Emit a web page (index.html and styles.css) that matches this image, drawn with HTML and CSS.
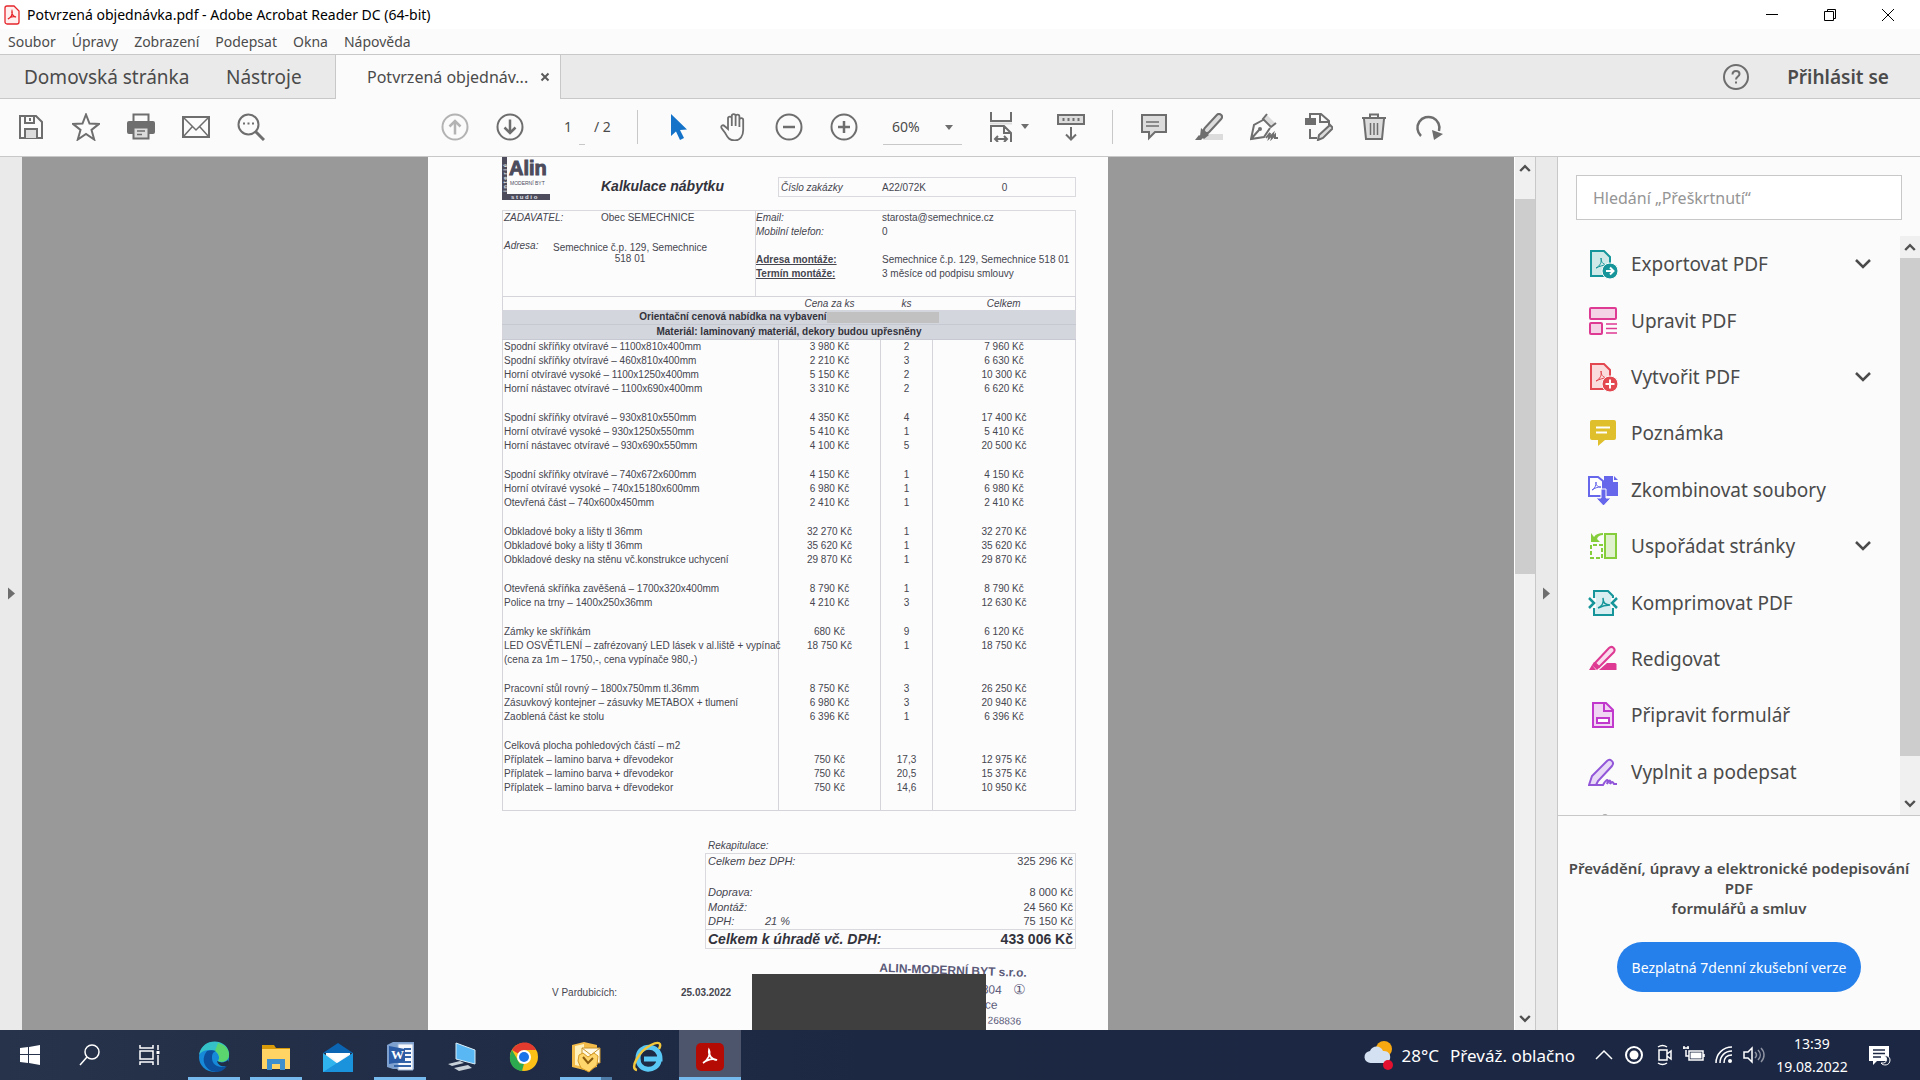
FILE: index.html
```html
<!DOCTYPE html>
<html lang="cs">
<head>
    <meta charset="UTF-8">
    <meta name="viewport" content="width=device-width, initial-scale=1.0">
    <title>Potvrzená objednávka.pdf - Adobe Acrobat Reader DC (64-bit)</title>
    <link rel="stylesheet" href="styles.css">
</head>
<body>
    <header class="titlebar">
        <svg class="app-icon" viewBox="0 0 16 20"><path d="M3 1h7l5 5v11a2 2 0 0 1-2 2H3a2 2 0 0 1-2-2V3a2 2 0 0 1 2-2z" fill="#fff0ef" stroke="#e5252a" stroke-width="1.3"/><path d="M4 14c3-1 5-5 4-8-1 3 2 6 4 6-3-1-6 0-8 2z" fill="none" stroke="#e5252a" stroke-width="1.3"/></svg>
        <span class="window-title">Potvrzená objednávka.pdf - Adobe Acrobat Reader DC (64-bit)</span>
        <div class="window-buttons">
            <button aria-label="Minimalizovat"><svg viewBox="0 0 14 14"><path d="M1 6.500h12"/></svg></button>
            <button aria-label="Obnovit"><svg viewBox="0 0 14 14"><path d="M1.500 3.500h9v9h-9zM4.500 3.500v-2h8v9h-2"/></svg></button>
            <button aria-label="Zavřít"><svg viewBox="0 0 14 14"><path d="M1 1l12 12M13 1L1 13"/></svg></button>
        </div>
    </header>

    <nav class="menubar">
        <a href="#">Soubor</a>
        <a href="#">Úpravy</a>
        <a href="#">Zobrazení</a>
        <a href="#">Podepsat</a>
        <a href="#">Okna</a>
        <a href="#">Nápověda</a>
    </nav>

    <div class="tabbar">
        <a class="tab home" href="#">Domovská stránka</a>
        <a class="tab tools-tab" href="#">Nástroje</a>
        <div class="tab active">
            <a href="#">Potvrzená objednáv...</a>
            <button class="tab-close" aria-label="Zavřít kartu"><svg viewBox="0 0 10 10"><path d="M1.500 1.500l7 7M8.500 1.500l-7 7"/></svg></button>
        </div>
        <div class="account">
            <button aria-label="Nápověda"><svg class="icon" viewBox="0 0 28 28"><circle cx="14" cy="14" r="12"/><path d="M10.500 11.500c0-5 7-4.500 7-.5 0 2.500-3.500 2.500-3.500 5.500M14 18.500v2"/></svg></button>
            <a class="login" href="#">Přihlásit se</a>
        </div>
    </div>

    <div class="toolbar">
        <div class="tool-group">
            <button aria-label="Uložit"><svg class="icon" viewBox="0 0 28 28"><path d="M3 3h16l6 6v16H3z"/><path d="M8 3v7h9V3M13 5v3"/><path class="shade" d="M8 25v-9h12v9"/></svg></button>
            <button aria-label="Přidat hvězdičku"><svg class="icon" viewBox="0 0 28 28"><path d="M14 1.500l3.500 9 9.500.4-7.500 6 2.700 9.600L14 21l-8.200 5.500 2.700-9.600-7.500-6 9.500-.4z"/></svg></button>
            <button aria-label="Tisk"><svg class="icon" viewBox="0 0 28 28"><path d="M6.500 9V1.500h15V9"/><path class="solid" d="M2 9h24a1 1 0 0 1 1 1v9a1 1 0 0 1-1 1h-3v-5H5v5H2a1 1 0 0 1-1-1v-9a1 1 0 0 1 1-1z"/><path class="shade" d="M6.500 14.500h15v11h-15z"/><path d="M10 18h8M10 21.500h5" stroke-width="1.500"/></svg></button>
            <button aria-label="Odeslat e-mailem"><svg class="icon" viewBox="0 0 28 28"><path d="M1 4h26v20H1z"/><path d="M1.500 4.500L14 17 26.500 4.500M1.500 23.500L10 14M26.500 23.500L18 14" stroke-width="1.500"/></svg></button>
            <button aria-label="Hledat"><svg class="icon" viewBox="0 0 28 28"><circle cx="11.500" cy="11.500" r="10"/><path d="M18.500 18.500l8.500 8.500" stroke-width="3"/><path d="M6 10.500h2M10.500 10.500h2M15 10.500h2"/></svg></button>
        </div>
        <div class="tool-group paging">
            <button class="disabled" aria-label="Předchozí stránka" disabled><svg class="icon" viewBox="0 0 28 28"><circle cx="14" cy="14" r="12.500"/><path d="M14 21.500V8M8.500 13.500L14 8l5.500 5.500" stroke-width="2.500"/></svg></button>
            <button aria-label="Další stránka"><svg class="icon" viewBox="0 0 28 28"><circle cx="14" cy="14" r="12.500"/><path d="M14 6.500V20M8.500 14.500L14 20l5.500-5.500" stroke-width="2.500"/></svg></button>
            <input class="page-number" type="text" value="1" aria-label="Číslo stránky">
            <span class="page-count">/ 2</span>
        </div>
        <span class="divider"></span>
        <div class="tool-group">
            <button aria-label="Výběr"><svg class="icon" viewBox="0 0 28 28"><path d="M6 1v22l5-4.500 4 8.500 4-2-4-8 7-.500z" fill="#1473c9" stroke="none"/></svg></button>
            <button aria-label="Ruka"><svg class="icon" viewBox="0 0 28 28"><path d="M8 16V5.500a1.900 1.900 0 0 1 3.800 0V13 3a1.900 1.900 0 0 1 3.800 0v10V3.500a1.900 1.900 0 0 1 3.800 0V14 7a1.900 1.900 0 0 1 3.800 0v10c0 6-3 10.500-8.500 10.500-6 0-7.500-4-9.500-7.500L1.500 15c-1-2.500 1.500-3.500 3-2z" stroke-width="1.800"/></svg></button>
            <button aria-label="Zmenšit"><svg class="icon" viewBox="0 0 28 28"><circle cx="14" cy="14" r="12.500"/><path d="M8 14h12" stroke-width="2.500"/></svg></button>
            <button aria-label="Zvětšit"><svg class="icon" viewBox="0 0 28 28"><circle cx="14" cy="14" r="12.500"/><path d="M8 14h12M14 8v12" stroke-width="2.500"/></svg></button>
        </div>
        <div class="zoom">
            <select aria-label="Lupa"><option>60%</option><option>100%</option></select>
            <svg viewBox="0 0 8 5"><path d="M0 0h8L4 5z"/></svg>
        </div>
        <button class="fit" aria-label="Přizpůsobit šířce">
            <svg class="icon" viewBox="0 0 24 30"><path d="M2 0v9h20V0"/><path d="M1 11.500h22" stroke="#dcdcdc"/><path d="M2 30V14h13l7 7v9M15 14v7h7M6 27h12M9 24l-3 3 3 3M15 24l3 3-3 3"/></svg>
            <svg class="caret" viewBox="0 0 8 5"><path d="M0 0h8L4 5z"/></svg>
        </button>
        <div class="tool-group scrolling">
            <button aria-label="Posouvání"><svg class="icon" viewBox="0 0 28 28"><path class="shade" d="M1 2h26v9H1z"/><path d="M6.500 5v3M11.500 5v3M16.500 5v3M21.500 5v3M14 14v12M9 21.500l5 5 5-5"/></svg></button>
        </div>
        <span class="divider"></span>
        <div class="tool-group">
            <button aria-label="Komentář"><svg class="icon" viewBox="0 0 28 28"><path class="shade" d="M2 2h24v17H15l-6 6v-6H2z"/><path d="M6 9h13M6 13h13" stroke-width="1.500"/></svg></button>
            <button aria-label="Zvýraznění"><svg class="icon" viewBox="0 0 28 28"><path d="M11 21h17v6H8z" fill="#dcdcdc" stroke="none"/><path d="M12 17L24 4" stroke-width="8" stroke-linecap="round"/><path d="M12 17L24 4" stroke="#dcdcdc" stroke-width="4" stroke-linecap="round"/><path d="M6 15l8 7-5 4-4-3zM0 27l4-5 4 3-2 2z" fill="#6e6e6e" stroke="none"/></svg></button>
            <button aria-label="Podpis"><svg class="icon" viewBox="0 0 28 28"><path d="M17 2l8 8-4 4-8-8z" fill="#dcdcdc" stroke="none"/><path d="M17 1l-4 5 8 8 5-4M13 7L4 12 1 26l13-2 6-9M1 26l8-9"/><circle cx="10" cy="16" r="1"/><path d="M16 25l4-5-1 5 4-4-1 4 3-3v3h3"/></svg></button>
            <button aria-label="Upravit"><svg class="icon" viewBox="0 0 28 28"><path d="M5 5V1h11l8 7v4M15 1v8h8M5 16v9h7"/><path d="M0 5h11v7H0z" fill="#6e6e6e" stroke="none"/><path class="shade" d="M13 27l1-5 11-10 3 3-10 10z"/></svg></button>
            <button aria-label="Odstranit"><svg class="icon" viewBox="0 0 28 28"><path d="M2 5h24M10 5V1.500h8V5"/><path class="shade" d="M4 6l2 20h16l2-20"/><path d="M10.500 10v12M14 10v12M17.500 10v12" stroke-width="1.500"/></svg></button>
            <button aria-label="Otočit"><svg class="icon" viewBox="0 0 28 28"><path d="M6 23A11 11 0 1 1 24 18" stroke-width="2.500"/><path d="M17 17l11 4-9 6z" fill="#6e6e6e" stroke="none"/></svg></button>
        </div>
    </div>

    <main class="workspace">
        <button class="left-strip" aria-label="Navigační panel"><svg viewBox="0 0 7 12"><path d="M0 0l7 6-7 6z"/></svg></button>

        <div class="viewer">
            <article class="sheet">
                <div class="sheet-head">
                    <svg class="logo" viewBox="0 0 48 43">
                        <path d="M0 0h5v37h43v6H0z" fill="#4c4c5c"/>
                        <text class="logo-name" x="7" y="18">Alin</text>
                        <text class="logo-small" x="8" y="28">MODERNÍ BYT</text>
                        <text class="logo-bar" x="9" y="42">s t u d i o</text>
                        <text class="logo-bar" transform="rotate(-90)" x="-35" y="5">i n t e r i é</text>
                    </svg>
                    <h1>Kalkulace nábytku</h1>
                    <div class="order-number"><em>Číslo zakázky</em><span>A22/072K</span><span class="zero">0</span></div>
                </div>

                <div class="parties">
                    <div class="client">
                        <div class="client-name"><em>ZADAVATEL:</em><span>Obec SEMECHNICE</span></div>
                        <div class="client-address"><em>Adresa:</em><span>Semechnice č.p. 129, Semechnice<br>518 01</span></div>
                    </div>
                    <dl class="contact">
                        <dt>Email:</dt><dd>starosta@semechnice.cz</dd>
                        <dt>Mobilní telefon:</dt><dd>0</dd>
                        <dt class="place">Adresa montáže:</dt><dd class="place-value">Semechnice č.p. 129, Semechnice 518 01</dd>
                        <dt class="term">Termín montáže:</dt><dd>3 měsíce od podpisu smlouvy</dd>
                    </dl>
                </div>

                <table class="items">
                    <colgroup><col class="col-name"><col class="col-price"><col class="col-count"><col></colgroup>
                    <thead>
                        <tr><th></th><th>Cena za ks</th><th>ks</th><th>Celkem</th></tr>
                        <tr class="band"><td colspan="4">Orientační cenová nabídka na vybavení<span class="redacted"></span></td></tr>
                        <tr class="band"><td colspan="4">Materiál: laminovaný materiál, dekory budou upřesněny</td></tr>
                    </thead>
                    <tbody>
                        <tr><td>Spodní skříňky otvíravé – 1100x810x400mm</td><td>3 980 Kč</td><td>2</td><td>7 960 Kč</td></tr>
                        <tr><td>Spodní skříňky otvíravé – 460x810x400mm</td><td>2 210 Kč</td><td>3</td><td>6 630 Kč</td></tr>
                        <tr><td>Horní otvíravé vysoké – 1100x1250x400mm</td><td>5 150 Kč</td><td>2</td><td>10 300 Kč</td></tr>
                        <tr><td>Horní nástavec otvíravé – 1100x690x400mm</td><td>3 310 Kč</td><td>2</td><td>6 620 Kč</td></tr>
                        <tr class="blank"><td></td><td></td><td></td><td></td></tr>
                        <tr><td>Spodní skříňky otvíravé – 930x810x550mm</td><td>4 350 Kč</td><td>4</td><td>17 400 Kč</td></tr>
                        <tr><td>Horní otvíravé vysoké – 930x1250x550mm</td><td>5 410 Kč</td><td>1</td><td>5 410 Kč</td></tr>
                        <tr><td>Horní nástavec otvíravé – 930x690x550mm</td><td>4 100 Kč</td><td>5</td><td>20 500 Kč</td></tr>
                        <tr class="blank"><td></td><td></td><td></td><td></td></tr>
                        <tr><td>Spodní skříňky otvíravé – 740x672x600mm</td><td>4 150 Kč</td><td>1</td><td>4 150 Kč</td></tr>
                        <tr><td>Horní otvíravé vysoké – 740x15180x600mm</td><td>6 980 Kč</td><td>1</td><td>6 980 Kč</td></tr>
                        <tr><td>Otevřená část – 740x600x450mm</td><td>2 410 Kč</td><td>1</td><td>2 410 Kč</td></tr>
                        <tr class="blank"><td></td><td></td><td></td><td></td></tr>
                        <tr><td>Obkladové boky a lišty tl 36mm</td><td>32 270 Kč</td><td>1</td><td>32 270 Kč</td></tr>
                        <tr><td>Obkladové boky a lišty tl 36mm</td><td>35 620 Kč</td><td>1</td><td>35 620 Kč</td></tr>
                        <tr><td>Obkladové desky na stěnu vč.konstrukce uchycení</td><td>29 870 Kč</td><td>1</td><td>29 870 Kč</td></tr>
                        <tr class="blank"><td></td><td></td><td></td><td></td></tr>
                        <tr><td>Otevřená skříňka zavěšená – 1700x320x400mm</td><td>8 790 Kč</td><td>1</td><td>8 790 Kč</td></tr>
                        <tr><td>Police na trny – 1400x250x36mm</td><td>4 210 Kč</td><td>3</td><td>12 630 Kč</td></tr>
                        <tr class="blank"><td></td><td></td><td></td><td></td></tr>
                        <tr><td>Zámky ke skříňkám</td><td>680 Kč</td><td>9</td><td>6 120 Kč</td></tr>
                        <tr><td>LED OSVĚTLENÍ – zafrézovaný LED lásek v al.liště + vypínač</td><td>18 750 Kč</td><td>1</td><td>18 750 Kč</td></tr>
                        <tr><td>(cena za 1m – 1750,-, cena vypínače 980,-)</td><td></td><td></td><td></td></tr>
                        <tr class="blank"><td></td><td></td><td></td><td></td></tr>
                        <tr><td>Pracovní stůl rovný – 1800x750mm tl.36mm</td><td>8 750 Kč</td><td>3</td><td>26 250 Kč</td></tr>
                        <tr><td>Zásuvkový kontejner – zásuvky METABOX + tlumení</td><td>6 980 Kč</td><td>3</td><td>20 940 Kč</td></tr>
                        <tr><td>Zaoblená část ke stolu</td><td>6 396 Kč</td><td>1</td><td>6 396 Kč</td></tr>
                        <tr class="blank"><td></td><td></td><td></td><td></td></tr>
                        <tr><td>Celková plocha pohledových částí – m2</td><td></td><td></td><td></td></tr>
                        <tr><td>Příplatek – lamino barva + dřevodekor</td><td>750 Kč</td><td>17,3</td><td>12 975 Kč</td></tr>
                        <tr><td>Příplatek – lamino barva + dřevodekor</td><td>750 Kč</td><td>20,5</td><td>15 375 Kč</td></tr>
                        <tr><td>Příplatek – lamino barva + dřevodekor</td><td>750 Kč</td><td>14,6</td><td>10 950 Kč</td></tr>
                        <tr class="blank"><td></td><td></td><td></td><td></td></tr>
                    </tbody>
                </table>

                <table class="summary">
                    <caption>Rekapitulace:</caption>
                    <tbody>
                        <tr><th>Celkem bez DPH:</th><td>325 296 Kč</td></tr>
                        <tr class="spacer"><th></th><td></td></tr>
                        <tr><th>Doprava:</th><td>8 000 Kč</td></tr>
                        <tr><th>Montáž:</th><td>24 560 Kč</td></tr>
                        <tr><th><span class="tax-name">DPH:</span>21 %</th><td>75 150 Kč</td></tr>
                        <tr class="total"><th>Celkem k úhradě vč. DPH:</th><td>433 006 Kč</td></tr>
                    </tbody>
                </table>

                <div class="sheet-foot">
                    <span class="city">V Pardubicích:</span>
                    <strong class="date">25.03.2022</strong>
                    <div class="stamp">
                        <div class="stamp-text"><b>ALIN-MODERNÍ BYT s.r.o.</b><span>304 <i>①</i></span><span class="stamp-city">ce</span><span class="stamp-id">268836</span></div>
                        <div class="cover"></div>
                    </div>
                </div>
            </article>
        </div>

        <div class="scrollbar viewer-scroll">
            <svg viewBox="0 0 10 6"><path d="M1 5.500l4-4 4 4"/></svg>
            <div class="thumb"></div>
            <svg class="down" viewBox="0 0 10 6"><path d="M1 .5l4 4 4-4"/></svg>
        </div>
        <button class="right-strip" aria-label="Skrýt panel nástrojů"><svg viewBox="0 0 7 12"><path d="M0 0l7 6-7 6z"/></svg></button>

        <aside class="panel">
            <div class="search"><input type="search" aria-label="Hledat nástroj" placeholder="Hledání „Přeškrtnutí“"></div>
            <div class="tools">
                <ul>
                    <li><a href="#"><svg viewBox="0 0 30 30"><path d="M3 2h13l6 6v19H3z" fill="#cfe8e8" stroke="#16969a" stroke-width="2"/><path d="M8 19c4-2 6-6 5-10 0 5 3 7 7 7-5 0-8 1-12 3z" fill="none" stroke="#16969a"/><circle cx="22" cy="22" r="8" fill="#16969a" stroke="#fbfbfb"/><path d="M18 22h7M22 18.500l3.500 3.500-3.500 3.500" fill="none" stroke="#fff" stroke-width="2"/></svg>Exportovat PDF<svg class="chevron" viewBox="0 0 16 10"><path d="M1 1l7 7 7-7"/></svg></a></li>
                    <li><a href="#"><svg viewBox="0 0 30 30"><g fill="#f5d3e7" stroke="#de3a93" stroke-width="2"><rect x="2" y="2" width="26" height="11" rx="1"/><rect x="2" y="17" width="12" height="11" rx="1"/></g><path d="M18 18h11M18 22.500h11M18 27h11" stroke="#de3a93" stroke-width="1.500"/></svg>Upravit PDF</a></li>
                    <li><a href="#"><svg viewBox="0 0 30 30"><path d="M3 2h13l6 6v19H3z" fill="#fadcdd" stroke="#e34850" stroke-width="2"/><path d="M8 19c4-2 6-6 5-10 0 5 3 7 7 7-5 0-8 1-12 3z" fill="none" stroke="#e34850"/><circle cx="22" cy="22" r="8" fill="#e34850" stroke="#fbfbfb"/><path d="M17.500 22h9M22 17.500v9" stroke="#fff" stroke-width="2"/></svg>Vytvořit PDF<svg class="chevron" viewBox="0 0 16 10"><path d="M1 1l7 7 7-7"/></svg></a></li>
                    <li><a href="#"><svg viewBox="0 0 30 30"><path d="M4 2h22a2 2 0 0 1 2 2v16a2 2 0 0 1-2 2H17l-7 6v-6H4a2 2 0 0 1-2-2V4a2 2 0 0 1 2-2z" fill="#dfbf2b"/><path d="M8 9.500h14M8 14.500h11" stroke="#fff" stroke-width="2"/></svg>Poznámka</a></li>
                    <li><a href="#"><svg viewBox="0 0 30 30"><path d="M1 2h9l5 4v15H1z" fill="#fff" stroke="#6767ec" stroke-width="2"/><path d="M4 15c3-1 4-5 4-8 0 4 2 5 5 5-4 0-6 1-9 3z" fill="none" stroke="#6767ec"/><path d="M16 1h9v6h5v14H16z" fill="#6767ec"/><path d="M26 1l4 4h-4z" fill="#6767ec"/><path d="M13 14h5v9h5l-7.500 8L8 23h5z" fill="#6767ec" stroke="#fbfbfb"/></svg>Zkombinovat soubory</a></li>
                    <li><a href="#"><svg viewBox="0 0 30 30"><rect x="17" y="3" width="11" height="24" fill="#e0f2cd" stroke="#85cd3b" stroke-width="2"/><path d="M3 14v13h11V14z" fill="none" stroke="#85cd3b" stroke-width="2" stroke-dasharray="4 2"/><path d="M3 2v9h9L9 8c1-3 3-4 6-4V2c-4 0-7 1-9 4z" fill="#85cd3b"/></svg>Uspořádat stránky<svg class="chevron" viewBox="0 0 16 10"><path d="M1 1l7 7 7-7"/></svg></a></li>
                    <li><a href="#"><svg viewBox="0 0 30 30"><path d="M6 10V3h14l5 5v2M6 20v7h19v-7" fill="#d9eef0" stroke="#16969a" stroke-width="2"/><path d="M8 10h15v10H8z" fill="#d9eef0"/><path d="M10 20c4-2 6-6 5-10 0 5 3 7 7 7-5 0-8 1-12 3z" fill="none" stroke="#16969a" stroke-width="1.500"/><path d="M1 10l5 5-5 5M29 10l-5 5 5 5" fill="none" stroke="#16969a" stroke-width="2.500"/></svg>Komprimovat PDF</a></li>
                    <li><a href="#"><svg viewBox="0 0 30 30"><path d="M11 26l8-7h8a1.500 1.500 0 0 1 1.500 1.500V26z" fill="#de3a93"/><path d="M7 19L21 4c3-3 7 1 5 4L11 23z" fill="#f9dced" stroke="#de3a93" stroke-width="2"/><path d="M6 18l6 5-3 3-5-5zM1 26l3-5 4 5z" fill="#de3a93"/></svg>Redigovat</a></li>
                    <li><a href="#"><svg viewBox="0 0 30 30"><path d="M5 3h13l7 7v17H5z" fill="#f0d6f2" stroke="#c038cc" stroke-width="2"/><path d="M16 3v8h9" fill="none" stroke="#c038cc" stroke-width="2"/><rect x="9" y="18" width="12" height="5" fill="#fff" stroke="#c038cc" stroke-width="2"/></svg>Připravit formulář</a></li>
                    <li><a href="#"><svg viewBox="0 0 30 30"><path d="M1 28l3-9L19 4c3-3 8 1 5 5L10 24l-2 4z" fill="#e8daf7" stroke="#9256d9" stroke-width="2"/><path d="M1 28h14c4-7 6-6 4-1 3-5 4-4 3 0 3-4 3-1 4 0h3" fill="none" stroke="#9256d9" stroke-width="2"/></svg>Vyplnit a podepsat</a></li>
                    <li class="next-tool"><svg viewBox="0 0 30 30"><circle cx="17" cy="32" r="3" fill="#aaa"/></svg></li>
                </ul>
                <div class="scrollbar">
                    <svg viewBox="0 0 10 6"><path d="M1 5.500l4-4 4 4"/></svg>
                    <div class="thumb"></div>
                    <svg class="down" viewBox="0 0 10 6"><path d="M1 .5l4 4 4-4"/></svg>
                </div>
            </div>
            <div class="promo">
                <p>Převádění, úpravy a elektronické podepisování PDF<br>formulářů a smluv</p>
                <button>Bezplatná 7denní zkušební verze</button>
            </div>
        </aside>
    </main>

    <footer class="taskbar">
        <button class="system" aria-label="Start"><svg viewBox="0 0 24 24"><path d="M2 5l8-1v7H2zM11 4l11-2v9H11zM2 12h8v8l-8-1zM11 12h11v10l-11-2z" fill="#fff"/></svg></button>
        <button class="system" aria-label="Hledat"><svg viewBox="0 0 24 24"><circle cx="14" cy="9" r="7" class="line"/><path class="line" d="M9 14l-7 8"/></svg></button>
        <button class="system" aria-label="Zobrazení úkolů"><svg viewBox="0 0 24 24"><path class="line" d="M2 2v3h13V2M2 8h13v8H2zM2 22v-3h13v3M20 2v5M20 12v10"/><path d="M18.500 8h3v3h-3z" fill="#fff"/></svg></button>

        <button class="app running" aria-label="Edge"><svg viewBox="0 0 32 32"><circle cx="16" cy="16" r="15" fill="#1689d8"/><path d="M1 14C4-4 29-3 31 12c1 8-7 10-11 8 3-4-1-12-9-11C6 9 2 12 1 14z" fill="#35c1c8"/><path d="M20 2c8 2 11 7 11 12 0 6-6 8-11 6 3-4 0-8-3-10z" fill="#5bd66f"/><path d="M9 10c-8 10 0 21 10 21 4 0 8-3 10-6-8 3-15-1-15-8 0-4 1-6 4-7-3-1-6-1-9 0z" fill="#0c4f9c"/><path d="M19 20c3 2 8 2 11-1 1 2 0 4-1 6-6 1-9-1-10-5z" fill="#222d46"/></svg></button>
        <button class="app running" aria-label="Průzkumník"><svg viewBox="0 0 32 32"><path d="M2 4h12l2 3h14v5H2z" fill="#d99a0a"/><path d="M2 8h28v20H2z" fill="#ffd464"/><path d="M7 29V18h18v11h-5v-6h-8v6z" fill="#3d8fce"/></svg></button>
        <button class="app" aria-label="Pošta"><svg viewBox="0 0 32 32"><path d="M1 12L16 2l15 10z" fill="#0b65b3"/><path d="M4 12h24v10H4z" fill="#f4f6f8"/><path d="M1 12l15 11 15-11v19H1z" fill="#30b4ee"/><path d="M1 31l30-19v19z" fill="#1a93dc"/><path d="M4 12h24L16 21z" fill="#fff"/></svg></button>
        <button class="app running" aria-label="Word"><svg viewBox="0 0 32 32"><path d="M3 4l6-3h21v27H9l-6-2z" fill="#7ea0cf"/><path d="M14 3h15v26H14z" fill="#f7f9fc" stroke="#9bb2d3"/><path d="M20 8h7M20 12h7M20 16h7M10 21h17M10 25h17" stroke="#3564a8" stroke-width="2"/><path d="M5 5l16 3v12L5 23z" fill="#2c5ca5"/><text class="word-letter" x="7" y="18">W</text></svg></button>
        <button class="app" aria-label="Vzdálená plocha"><svg viewBox="0 0 32 32"><path d="M10 2l19 7v14l-19-5z" fill="#59b7f4" stroke="#d8edf9"/><path d="M2 23l12-3 4 2-12 3zM8 27l14-3 4 3-13 3z" fill="#c8d0d8"/></svg></button>
        <button class="app" aria-label="Chrome"><svg viewBox="0 0 32 32"><circle cx="16" cy="16" r="14" fill="#fbc116"/><path d="M16 16L4 9C10-1 24-1 28 9H16z" fill="#e33b2e"/><path d="M4 9l8 14 5-4-3 11C3 29-1 18 4 9z" fill="#2da94f"/><circle cx="16" cy="16" r="7" fill="#fff"/><circle cx="16" cy="16" r="5" fill="#1a73e8"/></svg></button>
        <button class="app running grouped" aria-label="Outlook"><svg viewBox="0 0 32 32"><path d="M2 4l12-3 13 3v22L14 29 2 26z" fill="#f3bc4a"/><path d="M5 5l9-2v23l-9-2z" fill="#fff0bc"/><path d="M12 7h18v15H12z" fill="#fff8e3" stroke="#c9942a"/><path d="M12 7l9 7 9-7" fill="none" stroke="#c9942a"/><path d="M9 14l4-2 5 4 6-4 4 3-1 9-8 7-8-4-3-7z" fill="#ffd66b" stroke="#d69a26"/><path d="M13 16l5 6 5-5" fill="none" stroke="#8a5c10" stroke-width="2"/></svg></button>
        <button class="app" aria-label="Internet Explorer"><svg viewBox="0 0 32 32"><path d="M27 20c-2 11-21 12-21-3C6 3 28 2 28 18H12" fill="none" stroke="#5ac8f4" stroke-width="5"/><path d="M5 29c-8-1 2-19 14-25 8-4 11-2 8 4" fill="none" stroke="#f3c73c" stroke-width="2.500"/></svg></button>
        <button class="app running current" aria-label="Acrobat"><svg viewBox="0 0 32 32"><rect x="2" y="2" width="28" height="28" rx="5" fill="#b50b05"/><path d="M9 22c5-3 8-9 6-13-1 5 3 10 8 10-5-2-10 0-14 3z" fill="none" stroke="#fff" stroke-width="1.700"/></svg></button>

        <div class="tray">
            <svg class="weather" viewBox="0 0 30 30"><circle cx="20" cy="9" r="8" fill="#f8a912"/><path d="M7 23a6 6 0 0 1-1-12c2-6 11-6 13 0 9-1 10 12 1 12z" fill="#d4e1f3"/><circle cx="24" cy="25" r="5" fill="#e3112f"/></svg>
            <span class="temperature">28°C</span>
            <span class="forecast">Převáž. oblačno</span>
            <svg viewBox="0 0 24 24"><path class="line" d="M4 16l8-8 8 8"/></svg>
            <svg viewBox="0 0 24 24"><circle cx="12" cy="12" r="8" fill="none" stroke="#fff" stroke-width="2"/><circle cx="12" cy="12" r="4.500" fill="#fff"/></svg>
            <svg viewBox="0 0 24 24"><path class="line" d="M7 7h8v10H7zM15 11l4-3v8l-4-3M6 4c3-2 6-2 9 0M6 20c3 2 6 2 9 0"/></svg>
            <svg viewBox="0 0 24 24"><path class="line" d="M7 8h14v9H7zM22 11v3M1 5h6M2 3v3M6 3v3M4 7v6h3"/><path d="M8.500 9.500h11v6h-11z" fill="#fff"/></svg>
            <svg viewBox="0 0 24 24"><path class="line" d="M4 20C4 11 11 4 20 4M8 20C8 13 13 8 20 8M12 20c0-5 3-8 8-8"/><circle cx="18" cy="18" r="2" fill="#fff"/></svg>
            <svg viewBox="0 0 24 24"><path class="line" d="M2 9h4l4-4v14l-4-4H2z"/><path class="line faint" d="M13 9c2 2 2 4 0 6M16 7c3 3 3 7 0 10M19 5c4 4 4 10 0 14"/></svg>
            <div class="clock"><span>13:39</span><span>19.08.2022</span></div>
            <svg class="notice" viewBox="0 0 24 24"><path d="M2 3h20v15H10l-4 4v-4H2z" fill="#fff"/><path d="M6 7h12M6 10.500h12M6 14h8" stroke="#1e2944" stroke-width="1.500"/><path d="M17 13c3 0 5 8-3 7 2 3 9 3 9-3 0-3-3-5-6-4z" fill="#1e2944" stroke="#fff"/></svg>
        </div>
    </footer>
</body>
</html>
```

FILE: styles.css
```css
* {
    box-sizing: border-box;
}
body {
    margin: 0;
    height: 100vh;
    display: flex;
    flex-direction: column;
    overflow: hidden;
    font-family: "Noto Sans", "Open Sans", sans-serif;
    font-size: 14px;
    color: #4b4b4b;
    background: #fbfbfb;
}
a {
    color: inherit;
    text-decoration: none;
}
button {
    display: flex;
    align-items: center;
    justify-content: center;
    padding: 0;
    border: none;
    background: none;
    font: inherit;
    color: inherit;
}
svg {
    flex: none;
}

/* window frame */
.titlebar {
    display: flex;
    align-items: center;
    flex: none;
    height: 29px;
    padding-left: 4px;
    background: #fff;
    color: #000;
}
.app-icon {
    width: 16px;
    height: 20px;
    margin-right: 7px;
}
.window-buttons {
    display: flex;
    margin-left: auto;
}
.window-buttons button {
    width: 58px;
    height: 28px;
}
.window-buttons svg {
    width: 14px;
    height: 14px;
    fill: none;
    stroke: #000;
}
.window-buttons button:last-child {
    margin-right: 3px;
}
.menubar {
    display: flex;
    align-items: center;
    flex: none;
    gap: 16px;
    height: 26px;
    padding-left: 8px;
    border-bottom: 1px solid #c8c8c8;
}
.tabbar {
    display: flex;
    flex: none;
    height: 44px;
    background: #eaeaea;
    border-bottom: 1px solid #c8c8c8;
    font-size: 19px;
}
.tab {
    display: flex;
    align-items: center;
}
.home {
    width: 202px;
    padding-left: 24px;
}
.tools-tab {
    width: 133px;
    padding-left: 24px;
}
.active {
    justify-content: space-between;
    width: 226px;
    height: 44px;
    padding: 0 10px 0 31px;
    border: solid #c8c8c8;
    border-width: 0 1px;
    background: #fbfbfb;
    font-size: 16px;
}
.tab-close svg {
    width: 10px;
    height: 10px;
    stroke: #5a5a5a;
    stroke-width: 2;
}
.account {
    display: flex;
    align-items: center;
    gap: 37px;
    margin-left: auto;
    padding-right: 31px;
}
.login {
    font-size: 19px;
    font-weight: 600;
}

/* toolbar */
.toolbar {
    display: flex;
    align-items: center;
    flex: none;
    height: 58px;
    padding: 0 0 2px 3px;
    border-bottom: 1px solid #c8c8c8;
}
.tool-group {
    display: flex;
    align-items: center;
}
.tool-group button {
    width: 55px;
    height: 44px;
}
.icon {
    width: 28px;
    height: 28px;
    fill: none;
    stroke: #6e6e6e;
    stroke-width: 2;
}
.icon .shade {
    fill: #dcdcdc;
}
.icon .solid {
    fill: #6e6e6e;
}
.disabled {
    opacity: 0.5;
}
.paging {
    margin-left: 149px;
}
.page-number {
    width: 30px;
    height: 36px;
    margin-left: 18px;
    padding: 0 9px;
    border: none;
    background: linear-gradient(#c8c8c8, #c8c8c8) bottom right / 6px 1px no-repeat;
    font: inherit;
    color: inherit;
}
.page-count {
    width: 52px;
    padding-left: 9px;
}
.scrolling {
    margin-right: 14px;
}
.divider {
    width: 1px;
    height: 34px;
    margin-right: 13px;
    background: #c8c8c8;
}
.zoom {
    position: relative;
    width: 79px;
    height: 36px;
    margin-left: 12px;
    border-bottom: 1px solid #c8c8c8;
}
.zoom select {
    width: 100%;
    height: 100%;
    padding: 0 9px;
    border: none;
    appearance: none;
    background: none;
    font: inherit;
    color: inherit;
}
.zoom svg {
    position: absolute;
    right: 9px;
    top: 16px;
    width: 8px;
    height: 5px;
    fill: #6e6e6e;
}
.fit {
    gap: 8px;
    margin: 0 14px 0 27px;
}
.fit .icon {
    width: 24px;
    height: 30px;
}
.caret {
    width: 8px;
    height: 5px;
    fill: #6e6e6e;
}

/* work area */
.workspace {
    display: flex;
    flex: 1;
    min-height: 0;
}
.left-strip,
.right-strip {
    flex: none;
    width: 22px;
    background: #eaeaea;
}
.right-strip {
    width: 23px;
    border: solid #c8c8c8;
    border-width: 0 1px;
}
.left-strip svg,
.right-strip svg {
    width: 7px;
    height: 13px;
    fill: #6e6e6e;
}
.viewer {
    flex: 1;
    overflow: hidden;
    background: #999;
}
.scrollbar {
    display: flex;
    flex-direction: column;
    align-items: center;
    flex: none;
    width: 20px;
    background: #f0f0f0;
}
.scrollbar svg {
    width: 12px;
    height: 8px;
    margin: 7px 0;
    fill: none;
    stroke: #505050;
    stroke-width: 2;
}
.scrollbar .down {
    margin-top: auto;
}
.thumb {
    width: 100%;
    height: 86%;
    background: #cdcdcd;
}
.viewer-scroll {
    width: 21px;
    border-left: 1px solid #fff;
}
.viewer-scroll .thumb {
    height: 43%;
    margin-top: 20px;
}

/* scanned sheet */
.sheet {
    width: 680px;
    min-height: 100%;
    margin: 0 auto;
    padding: 0 32px 0 74px;
    background: #fcfcfd;
    font: 10px/14px "Liberation Sans", Arial, sans-serif;
    color: #46464f;
}
.sheet-head {
    display: flex;
    height: 53px;
}
.logo {
    width: 48px;
    height: 43px;
    overflow: hidden;
}
.logo text {
    fill: #4c4c5c;
}
.logo .logo-name {
    font-size: 20px;
    font-weight: bold;
    stroke: #4c4c5c;
}
.logo .logo-small {
    font-size: 5px;
}
.logo .logo-bar {
    font-size: 6px;
    font-weight: bold;
    fill: #e4e4ea;
}
.sheet h1 {
    margin: 21px 0 0 51px;
    font-size: 14px;
    line-height: 16px;
    font-style: italic;
    color: #33333c;
}
.order-number {
    display: grid;
    grid-template-columns: 101px 52px 1fr;
    align-items: center;
    width: 298px;
    height: 20px;
    margin: 20px 0 0 auto;
    padding: 2px 0 0 2px;
    border: 1px solid #dadade;
}
.zero {
    text-align: center;
}
.parties {
    display: grid;
    grid-template-columns: 252px 1fr;
    height: 86px;
    border: solid #dadade;
    border-width: 1px 1px 0;
}
.client div {
    display: flex;
    padding-left: 1px;
}
.client-name em {
    width: 97px;
}
.client-address {
    margin-top: 14px;
}
.client-address em {
    width: 49px;
}
.client-address span {
    padding-top: 3px;
    line-height: 11px;
    text-align: center;
}
.contact {
    display: grid;
    grid-template-columns: 126px 1fr;
    align-content: start;
    margin: 0;
    border-left: 1px solid #dadade;
}
.contact dt {
    font-style: italic;
}
.contact dd {
    margin: 0;
}
.contact .place,
.contact .term {
    font-style: normal;
    font-weight: bold;
    text-decoration: underline;
}
.contact .place,
.contact .place-value {
    margin-top: 14px;
}
.items {
    width: 100%;
    table-layout: fixed;
    border-collapse: collapse;
    border: 1px solid #d4d4da;
}
.col-name {
    width: 276px;
}
.col-price {
    width: 102px;
}
.col-count {
    width: 52px;
}
.items td,
.items th {
    height: 14px;
    padding: 0;
    text-align: center;
    white-space: nowrap;
}
.items th {
    height: 13px;
    line-height: 13px;
    font-weight: normal;
    font-style: italic;
}
.items tbody td {
    border-left: 1px solid #d4d4da;
}
.items tbody td:first-child {
    padding-left: 1px;
    text-align: left;
}
.items .blank td {
    height: 15px;
}
.items .band td {
    background: #d3d6dd;
    border-bottom: 1px solid #c6c9d1;
    font-weight: bold;
    color: #33333c;
}
.redacted {
    display: inline-block;
    width: 112px;
    height: 11px;
    vertical-align: middle;
    background: #c1c1c1;
}
.summary {
    width: 371px;
    margin: 28px 0 0 auto;
    border-collapse: collapse;
    border: 1px solid #dadade;
    font-size: 11px;
}
.summary caption {
    padding-left: 3px;
    text-align: left;
    font-size: 10px;
    font-style: italic;
}
.summary th,
.summary td {
    height: 15px;
    padding: 0 2px;
    text-align: right;
}
.summary th {
    text-align: left;
    font-weight: normal;
    font-style: italic;
}
.tax-name {
    display: inline-block;
    width: 57px;
}
.summary .spacer th {
    height: 16px;
}
.summary .total th,
.summary .total td {
    height: 19px;
    border-top: 1px solid #dadade;
    font-size: 14px;
    font-weight: bold;
    color: #33333c;
}
.sheet-foot {
    display: flex;
    padding: 11px 0 0 50px;
}
.city {
    width: 129px;
    padding-top: 26px;
}
.date {
    width: 71px;
    padding-top: 26px;
}
.stamp {
    position: relative;
    flex: 1;
    height: 74px;
}
.stamp-text {
    display: flex;
    flex-direction: column;
    align-items: flex-end;
    padding: 2px 50px 0 0;
    color: #5a5a78;
    font-size: 12px;
    line-height: 15px;
    transform: rotate(2deg);
}
.stamp-text b {
    margin-bottom: 2px;
}
.stamp-text i {
    padding-left: 8px;
    font-size: 14px;
    font-style: normal;
}
.stamp-city {
    padding-right: 28px;
}
.stamp-id {
    padding-right: 4px;
    font-size: 10px;
}
.cover {
    position: absolute;
    left: 0;
    top: 14px;
    width: 234px;
    height: 60px;
    background: #3f3f3f;
}

/* tools panel */
.panel {
    display: flex;
    flex-direction: column;
    flex: none;
    width: 362px;
}
.search {
    flex: none;
    padding: 18px 18px 16px;
}
.search input {
    width: 100%;
    height: 45px;
    padding: 0 16px;
    border: 1px solid #c8c8c8;
    background: #fff;
    font: inherit;
    font-size: 16px;
}
.search input::placeholder {
    color: #959595;
}
.tools {
    display: flex;
    flex: 1;
    min-height: 0;
    border-bottom: 1px solid #c8c8c8;
}
.tools ul {
    display: grid;
    grid-template-rows: repeat(10, 1fr) 15px;
    flex: 1;
    margin: 0;
    padding: 0 29px 0 30px;
    list-style: none;
    overflow: hidden;
}
.tools a {
    display: flex;
    align-items: center;
    gap: 13px;
    height: 100%;
    font-size: 19px;
}
.tools a svg {
    width: 30px;
    height: 30px;
}
.tools a .chevron {
    width: 16px;
    height: 10px;
    margin-left: auto;
    fill: none;
    stroke: #4b4b4b;
    stroke-width: 2.5;
}
.next-tool {
    display: flex;
    align-items: flex-end;
    overflow: hidden;
}
.next-tool svg {
    width: 30px;
    height: 30px;
}
.promo {
    flex: none;
    height: 214px;
    padding-top: 42px;
    text-align: center;
}
.promo p {
    margin: 0 0 24px;
    font-size: 15px;
    line-height: 20px;
    font-weight: 600;
}
.promo button {
    display: inline-flex;
    height: 50px;
    padding: 0 15px;
    border-radius: 25px;
    background: #2680eb;
    color: #fff;
}

/* taskbar */
.taskbar {
    display: flex;
    flex: none;
    height: 50px;
    padding-right: 24px;
    background: linear-gradient(90deg, #26334a, #1c2742 45%, #1c2744);
    color: #fff;
}
.taskbar svg {
    width: 24px;
    height: 24px;
}
.line {
    fill: none;
    stroke: #fff;
    stroke-width: 1.5;
}
.faint {
    opacity: 0.5;
}
.system {
    width: 60px;
}
.system:nth-child(3) {
    margin-right: 3px;
}
.app {
    width: 62px;
    border: solid transparent;
    border-width: 3px 5px 0;
}
.app svg {
    width: 32px;
    height: 32px;
}
.running {
    background: linear-gradient(#76b9ed, #76b9ed) bottom / 100% 3px no-repeat;
    background-clip: padding-box;
}
.grouped {
    background-image: linear-gradient(90deg, #76b9ed 78%, #4d7ba5 78%);
}
.current {
    border-width: 3px 0 0;
    background-color: #4c556c;
    background-clip: border-box;
}
.word-letter {
    font: bold 13px "Liberation Serif", serif;
    fill: #fff;
}
.tray {
    display: flex;
    align-items: center;
    margin-left: auto;
    gap: 6px;
}
.tray .weather {
    width: 30px;
    height: 30px;
}
.temperature,
.forecast {
    font-size: 17px;
}
.temperature {
    margin: 0 5px 0 2px;
}
.forecast {
    margin-right: 11px;
}
.clock {
    display: flex;
    flex-direction: column;
    align-items: center;
    width: 80px;
    line-height: 23px;
}
.tray .notice {
    margin: 0 5px 0 9px;
}
```
